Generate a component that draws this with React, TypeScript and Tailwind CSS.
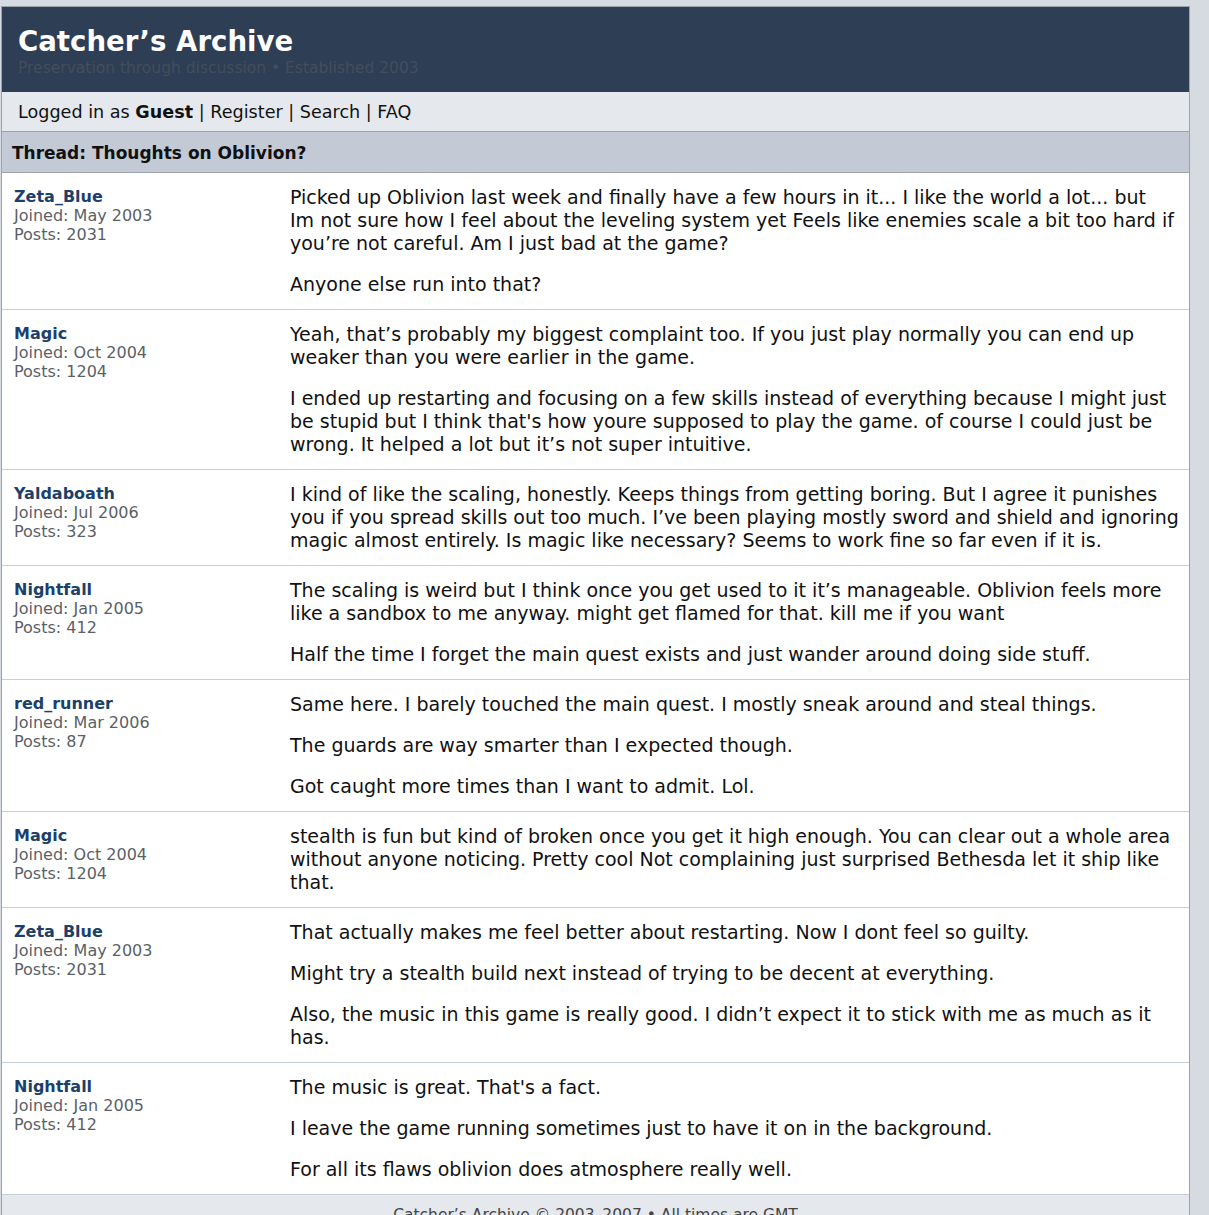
import React from "react";

type Post = {
  user: string;
  joined: string;
  posts: string;
  paras: string[][];
};

const POSTS: Post[] = [
  {
    user: "Zeta_Blue",
    joined: "May 2003",
    posts: "2031",
    paras: [
      [
        "Picked up Oblivion last week and finally have a few hours in it... I like the world a lot... but",
        "Im not sure how I feel about the leveling system yet Feels like enemies scale a bit too hard if",
        "you\u2019re not careful. Am I just bad at the game?",
      ],
      ["Anyone else run into that?"],
    ],
  },
  {
    user: "Magic",
    joined: "Oct 2004",
    posts: "1204",
    paras: [
      [
        "Yeah, that\u2019s probably my biggest complaint too. If you just play normally you can end up",
        "weaker than you were earlier in the game.",
      ],
      [
        "I ended up restarting and focusing on a few skills instead of everything because I might just",
        "be stupid but I think that's how youre supposed to play the game. of course I could just be",
        "wrong. It helped a lot but it\u2019s not super intuitive.",
      ],
    ],
  },
  {
    user: "Yaldaboath",
    joined: "Jul 2006",
    posts: "323",
    paras: [
      [
        "I kind of like the scaling, honestly. Keeps things from getting boring. But I agree it punishes",
        "you if you spread skills out too much. I\u2019ve been playing mostly sword and shield and ignoring",
        "magic almost entirely. Is magic like necessary? Seems to work fine so far even if it is.",
      ],
    ],
  },
  {
    user: "Nightfall",
    joined: "Jan 2005",
    posts: "412",
    paras: [
      [
        "The scaling is weird but I think once you get used to it it\u2019s manageable. Oblivion feels more",
        "like a sandbox to me anyway. might get flamed for that. kill me if you want",
      ],
      ["Half the time I forget the main quest exists and just wander around doing side stuff."],
    ],
  },
  {
    user: "red_runner",
    joined: "Mar 2006",
    posts: "87",
    paras: [
      ["Same here. I barely touched the main quest. I mostly sneak around and steal things."],
      ["The guards are way smarter than I expected though."],
      ["Got caught more times than I want to admit. Lol."],
    ],
  },
  {
    user: "Magic",
    joined: "Oct 2004",
    posts: "1204",
    paras: [
      [
        "stealth is fun but kind of broken once you get it high enough. You can clear out a whole area",
        "without anyone noticing. Pretty cool Not complaining just surprised Bethesda let it ship like",
        "that.",
      ],
    ],
  },
  {
    user: "Zeta_Blue",
    joined: "May 2003",
    posts: "2031",
    paras: [
      ["That actually makes me feel better about restarting. Now I dont feel so guilty."],
      ["Might try a stealth build next instead of trying to be decent at everything."],
      [
        "Also, the music in this game is really good. I didn\u2019t expect it to stick with me as much as it",
        "has.",
      ],
    ],
  },
  {
    user: "Nightfall",
    joined: "Jan 2005",
    posts: "412",
    paras: [
      ["The music is great. That's a fact."],
      ["I leave the game running sometimes just to have it on in the background."],
      ["For all its flaws oblivion does atmosphere really well."],
    ],
  },
];

function PostRow({ post }: { post: Post }) {
  return (
    <div className="flex border-b border-[#c9cfd8] bg-white">
      <div className="w-[276px] shrink-0 pl-3 pt-[14px] pb-[12px]">
        <div className="text-[16px] leading-[19px] font-bold text-[#1c3f6c]">{post.user}</div>
        <div className="text-[16px] leading-[19px] text-[#5b5f66]">Joined: {post.joined}</div>
        <div className="text-[16px] leading-[19px] text-[#5b5f66]">Posts: {post.posts}</div>
      </div>
      <div className="flex-1 min-w-0 pl-3 pr-[14px] pt-[13px] pb-[13px] text-[19px] leading-[23px] text-[#111]">
        {post.paras.map((lines, i) => (
          <p key={i} className={i < post.paras.length - 1 ? "mb-[18px]" : ""}>
            {lines.map((l, j) => (
              <span key={j} className="block whitespace-nowrap">
                {l}
              </span>
            ))}
          </p>
        ))}
      </div>
    </div>
  );
}

export default function App() {
  return (
    <div
      className="min-h-screen bg-[#d6dbe2] pt-[6px] pl-[1px]"
      style={{ fontFamily: 'Verdana, "DejaVu Sans", sans-serif' }}
    >
      <div className="w-[1189px] border border-[#9aa2ad] bg-white">
        <div className="bg-[#2e3e55] px-4 pt-[18px] pb-[14px]">
          <div className="text-[27.6px] leading-[33px] font-bold text-white">Catcher’s Archive</div>
          <div className="text-[15.5px] leading-[20px] text-[#434d5c]">
            Preservation through discussion • Established 2003
          </div>
        </div>
        <div className="bg-[#e5e9ee] border-b border-[#9ca3ad] px-4 pt-[10px] pb-[8px] text-[17.6px] leading-[21px] text-[#111]">
          Logged in as <span className="font-bold">Guest</span> | Register | Search | FAQ
        </div>
        <div className="bg-[#c3cad5] border-b border-[#9ca3ad] px-[10px] pt-[11px] pb-[9px] text-[17px] leading-[20px] font-bold text-[#111]">
          Thread: Thoughts on Oblivion?
        </div>
        {POSTS.map((p, i) => (
          <PostRow key={i} post={p} />
        ))}
        <div className="bg-[#e5e9ee] pt-[10px] pb-[12px] text-center text-[15.5px] leading-[20px] text-[#444]">
          Catcher’s Archive © 2003–2007 • All times are GMT
        </div>
      </div>
    </div>
  );
}
